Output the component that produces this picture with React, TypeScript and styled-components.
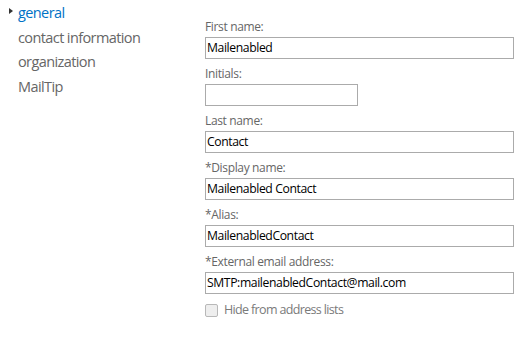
import React from "react";
import styled, { createGlobalStyle } from "styled-components";

const Global = createGlobalStyle`
  html, body { margin: 0; padding: 0; background: #ffffff; }
  body { font-family: "Open Sans", "Noto Sans", sans-serif; }
`;

const Page = styled.div`
  display: flex;
  width: 529px;
  height: 339px;
  background: #fff;
`;

const Nav = styled.ul`
  list-style: none;
  margin: 0;
  padding: 0 0 0 18px;
  width: 187px;
  display: flex;
  flex-direction: column;
`;

const NavItem = styled.li<{ $active?: boolean }>`
  position: relative;
  font-size: 14.5px;
  letter-spacing: -0.6px;
  line-height: 25px;
  height: 24.6px;
  color: ${(p) => (p.$active ? "#0072c6" : "#666666")};
`;

const Arrow = styled.span`
  position: absolute;
  left: -9px;
  top: 8px;
  width: 0;
  height: 0;
  border-top: 3.5px solid transparent;
  border-bottom: 3.5px solid transparent;
  border-left: 4px solid #333333;
`;

const Form = styled.div`
  display: flex;
  flex-direction: column;
  padding-top: 12px;
`;

const Label = styled.label`
  display: block;
  font-size: 12px;
  letter-spacing: -0.35px;
  line-height: 16px;
  padding-top: 7px;
  padding-bottom: 2px;
  color: #666666;
`;

const Input = styled.div<{ $w: number }>`
  box-sizing: border-box;
  width: ${(p) => p.$w}px;
  height: 22px;
  border: 1px solid #ababab;
  padding: 0 1px;
  font-size: 12.2px;
  letter-spacing: -0.4px;
  line-height: 20px;
  color: #000000;
  white-space: nowrap;
  overflow: hidden;
`;

const CheckRow = styled.div`
  display: flex;
  align-items: center;
  gap: 6px;
  margin-top: 8px;
`;

const Box = styled.span`
  box-sizing: border-box;
  width: 13px;
  height: 13px;
  border: 1px solid #b8b8b8;
  border-radius: 2px;
  background: #eeeeee;
`;

const CheckText = styled.span`
  font-size: 12.5px;
  letter-spacing: -0.65px;
  color: #7a7a7a;
  line-height: 16px;
`;

const fields: { label: string; value: string; w: number }[] = [
  { label: "First name:", value: "Mailenabled", w: 309 },
  { label: "Initials:", value: "", w: 153 },
  { label: "Last name:", value: "Contact", w: 309 },
  { label: "*Display name:", value: "Mailenabled Contact", w: 309 },
  { label: "*Alias:", value: "MailenabledContact", w: 309 },
  { label: "*External email address:", value: "SMTP:mailenabledContact@mail.com", w: 309 },
];

export default function App() {
  return (
    <>
      <Global />
      <Page>
        <Nav>
          <NavItem $active>
            <Arrow />
            general
          </NavItem>
          <NavItem>contact information</NavItem>
          <NavItem>organization</NavItem>
          <NavItem>MailTip</NavItem>
        </Nav>
        <Form>
          {fields.map((f) => (
            <React.Fragment key={f.label}>
              <Label>{f.label}</Label>
              <Input $w={f.w}>{f.value}</Input>
            </React.Fragment>
          ))}
          <CheckRow>
            <Box />
            <CheckText>Hide from address lists</CheckText>
          </CheckRow>
        </Form>
      </Page>
    </>
  );
}
